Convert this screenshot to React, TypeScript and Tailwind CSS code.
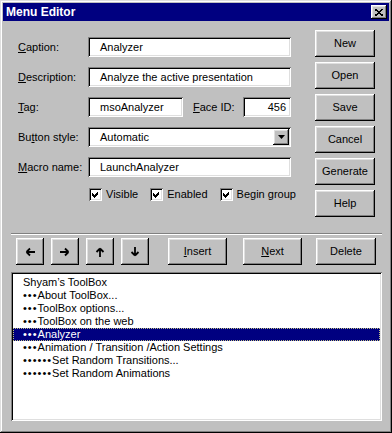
import type { ReactNode } from 'react'

const raised =
  'bg-[#c0c0c0] shadow-[inset_-1px_-1px_#000,inset_1px_1px_#fff,inset_-2px_-2px_#808080,inset_2px_2px_#dfdfdf]'
const sunken =
  'bg-white shadow-[inset_1px_1px_#808080,inset_-1px_-1px_#fff,inset_2px_2px_#000,inset_-2px_-2px_#dfdfdf]'

const items: [number, string][] = [
  [0, 'Shyam\u2019s ToolBox'],
  [3, 'About ToolBox...'],
  [3, 'ToolBox options...'],
  [3, 'ToolBox on the web'],
  [3, 'Analyzer'],
  [3, 'Animation / Transition /Action Settings'],
  [6, 'Set Random Transitions...'],
  [6, 'Set Random Animations'],
]

export default function App() {
  return (
    <div
      className="w-[392px] h-[433px] p-[3px] bg-[#c0c0c0] text-[11px] leading-[13px] text-black shadow-[inset_-1px_-1px_#000,inset_1px_1px_#dfdfdf,inset_-2px_-2px_#808080,inset_2px_2px_#fff]"
      style={{ fontFamily: '"Liberation Sans", Arial, sans-serif' }}
    >
      {/* Title bar */}
      <div className="h-[18px] bg-[#000080] flex items-center justify-between pl-[3px] pr-[2px]">
        <span className="text-white font-bold text-[12px]">Menu Editor</span>
        <div className={`${raised} w-[16px] h-[14px] flex items-center justify-center`}>
          <svg width="8" height="7" viewBox="0 0 8 7" shapeRendering="crispEdges">
            <path d="M0 0 L8 7 M8 0 L0 7" stroke="#000" strokeWidth="1.6" />
          </svg>
        </div>
      </div>

      {/* Top section */}
      <div className="flex pt-[9px]">
        <div className="ml-[15px] w-[273px] pt-[7px] flex flex-col gap-[10px]">
          <Row label={<><u>C</u>aption:</>}>
            <Field w="w-[203px]">Analyzer</Field>
          </Row>
          <Row label={<><u>D</u>escription:</>}>
            <Field w="w-[203px]">Analyze the active presentation</Field>
          </Row>
          <Row label={<><u>T</u>ag:</>}>
            <Field w="w-[95px]">msoAnalyzer</Field>
            <span className="ml-[10px] w-[50px]">
              <u>F</u>ace ID:
            </span>
            <div className={`${sunken} w-[48px] h-[20px] flex items-center justify-end pr-[5px]`}>456</div>
          </Row>
          <Row label={<>Bu<u>t</u>ton style:</>}>
            <div className={`${sunken} w-[203px] h-[20px] flex items-center pl-[12px] pr-[2px]`}>
              <span className="flex-1">Automatic</span>
              <div className={`${raised} w-[16px] h-[16px] flex items-center justify-center`}>
                <svg width="7" height="4" viewBox="0 0 7 4">
                  <polygon points="0,0 7,0 3.5,4" fill="#000" />
                </svg>
              </div>
            </div>
          </Row>
          <Row label={<><u>M</u>acro name:</>}>
            <Field w="w-[203px]">LaunchAnalyzer</Field>
          </Row>
          <div className="flex items-center ml-[71px] mt-[1px] whitespace-nowrap">
            <Check label="Visible" />
            <Check label="Enabled" className="ml-[12px]" />
            <Check label="Begin group" className="ml-[12px]" />
          </div>
        </div>

        <div className="ml-[24px] w-[60px] flex flex-col gap-[5px]">
          {['New', 'Open', 'Save', 'Cancel', 'Generate', 'Help'].map((b) => (
            <Btn key={b} w="w-[60px]">
              {b}
            </Btn>
          ))}
        </div>
      </div>

      {/* Separator */}
      <div className="ml-[8px] w-[371px] mt-[16px] border-t border-[#808080] border-b border-b-white" />

      {/* Navigation row */}
      <div className="flex mt-[3px] ml-[13px]">
        <Btn w="w-[28px]">
          <Arrow d="M1.5 5 L10 5 M1.5 5 L5 1.5 M1.5 5 L5 8.5" />
        </Btn>
        <Btn w="w-[28px]" className="ml-[7px]">
          <Arrow d="M0 5 L8.5 5 M8.5 5 L5 1.5 M8.5 5 L5 8.5" />
        </Btn>
        <Btn w="w-[28px]" className="ml-[7px]">
          <Arrow d="M5 1.5 L5 10 M5 1.5 L1.5 5 M5 1.5 L8.5 5" />
        </Btn>
        <Btn w="w-[28px]" className="ml-[7px]">
          <Arrow d="M5 0 L5 8.5 M5 8.5 L1.5 5 M5 8.5 L8.5 5" />
        </Btn>
        <Btn w="w-[59px]" className="ml-[19px]">
          <u>I</u>nsert
        </Btn>
        <Btn w="w-[59px]" className="ml-[16px]">
          <u>N</u>ext
        </Btn>
        <Btn w="w-[60px]" className="ml-[14px]">
          Delete
        </Btn>
      </div>

      {/* List */}
      <div className={`${sunken} ml-[8px] w-[371px] h-[149px] mt-[7px] p-[2px] pt-[4px]`}>
        {items.map(([lvl, text], i) => (
          <div
            key={i}
            className={
              i === 4
                ? 'h-[13px] pl-[10px] bg-[#000080] text-white whitespace-nowrap outline-1 outline-dotted outline-[#c0c080] -outline-offset-1'
                : 'h-[13px] pl-[10px] whitespace-nowrap'
            }
          >
            {lvl > 0 && <span className="tracking-[1px]">{'\u2022'.repeat(lvl)}</span>}
            {text}
          </div>
        ))}
      </div>
    </div>
  )
}

function Row({ label, children }: { label: ReactNode; children: ReactNode }) {
  return (
    <div className="flex items-center h-[20px]">
      <span className="w-[70px]">{label}</span>
      {children}
    </div>
  )
}

function Field({ w, children }: { w: string; children: ReactNode }) {
  return <div className={`${sunken} ${w} h-[20px] flex items-center pl-[12px]`}>{children}</div>
}

function Btn({ w, className = '', children }: { w: string; className?: string; children: ReactNode }) {
  return (
    <div className={`${raised} ${w} h-[27px] flex items-center justify-center ${className}`}>{children}</div>
  )
}

function Arrow({ d }: { d: string }) {
  return (
    <svg width="10" height="10" viewBox="0 0 10 10">
      <path d={d} stroke="#000" strokeWidth="1.8" fill="none" />
    </svg>
  )
}

function Check({ label, className = '' }: { label: string; className?: string }) {
  return (
    <div className={`flex items-center ${className}`}>
      <div className={`${sunken} w-[13px] h-[13px] flex items-center justify-center`}>
        <svg width="13" height="13" viewBox="0 0 13 13" shapeRendering="crispEdges">
          <polygon points="3,5 5,7 9,3 9,6 5,10 3,8" fill="#000" />
        </svg>
      </div>
      <span className="ml-[4px]">{label}</span>
    </div>
  )
}
